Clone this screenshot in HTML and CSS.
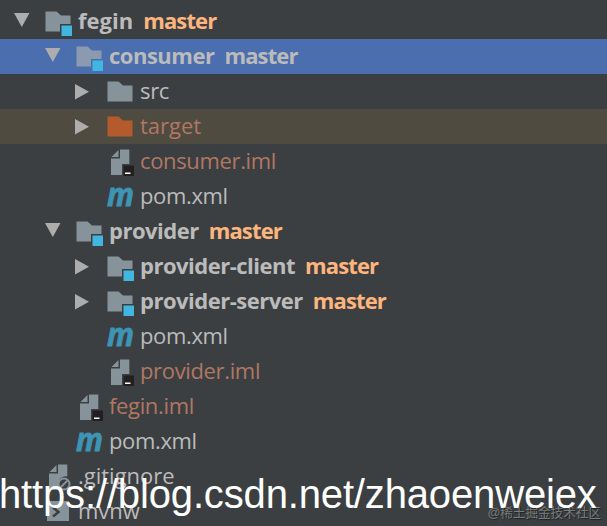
FILE: index.html
```html
<!DOCTYPE html>
<html lang="en">
<head>
    <meta charset="UTF-8">
    <meta name="viewport" content="width=device-width, initial-scale=1.0">
    <title>Project</title>
    <link rel="stylesheet" href="styles.css">
</head>
<body>
    <!-- Shared icons -->
    <svg class="sprite">
        <symbol id="open" viewBox="0 0 16 35"><path d="M0 9h15.5L7.8 23z" fill="#adadad"/></symbol>
        <symbol id="closed" viewBox="0 0 16 35"><path d="M-1 10v15.500L13 17.700z" fill="#adadad"/></symbol>
        <symbol id="folder" viewBox="0 0 32 35"><path d="M1.500 7.500h11l4.500 4H26.500v16h-25z"/></symbol>
        <symbol id="module" viewBox="0 0 32 35">
            <path d="M1.500 7.500h11l4.500 4H26.500v8.500h-10.500v7.500h-14.500z"/>
            <path d="M17.500 21.500H28V32H17.500z" fill="#40b6e0"/>
        </symbol>
        <symbol id="iml" viewBox="0 0 32 35">
            <path d="M14 5.500h9.300v14.500h-7.300v11H5V14.500h9z M12.500 6v7H5.500z"/>
            <path d="M17.500 21.500H28V32H17.500z" fill="#231f20"/>
            <path d="M19 28.500h5.500v1.500H19z" fill="#fff"/>
        </symbol>
        <symbol id="maven" viewBox="0 0 32 35">
            <text x="1" y="27" textLength="27" lengthAdjust="spacingAndGlyphs" class="m">m</text>
        </symbol>
        <symbol id="ignore" viewBox="0 0 32 35">
            <path d="M14 5.500h9.300v12c-5-1-10 3-8.300 9v4.500H5V14.500h9z M12.500 6v7H5.500z"/>
            <circle cx="20" cy="25" r="5.500" fill="none" stroke="#87939a" stroke-width="2"/>
            <path d="M16.500 28.500l7-7" stroke="#87939a" stroke-width="2"/>
        </symbol>
        <symbol id="shell" viewBox="0 0 32 35">
            <path d="M3 7h22v20H3z"/>
            <path d="M9 13.500l5.500 4.500-5.500 4.500" fill="none" stroke="#3c3f41" stroke-width="2.500"/>
        </symbol>
    </svg>

    <div class="tree">
        <div class="row module root">
            <svg class="arrow"><use href="#open"/></svg><svg class="icon"><use href="#module"/></svg>
            <span class="name">fegin</span><span class="branch">master</span>
        </div>
        <div class="row module level1 selected">
            <svg class="arrow"><use href="#open"/></svg><svg class="icon"><use href="#module"/></svg>
            <span class="name">consumer</span><span class="branch">master</span>
        </div>
        <div class="row level2">
            <svg class="arrow"><use href="#closed"/></svg><svg class="icon"><use href="#folder"/></svg>
            <span class="name">src</span>
        </div>
        <div class="row level2 excluded">
            <svg class="arrow"><use href="#closed"/></svg><svg class="icon"><use href="#folder"/></svg>
            <span class="name">target</span>
        </div>
        <div class="row level2 ignored">
            <svg class="arrow"></svg><svg class="icon"><use href="#iml"/></svg>
            <span class="name">consumer.iml</span>
        </div>
        <div class="row level2">
            <svg class="arrow"></svg><svg class="icon"><use href="#maven"/></svg>
            <span class="name">pom.xml</span>
        </div>
        <div class="row module level1">
            <svg class="arrow"><use href="#open"/></svg><svg class="icon"><use href="#module"/></svg>
            <span class="name">provider</span><span class="branch">master</span>
        </div>
        <div class="row module level2">
            <svg class="arrow"><use href="#closed"/></svg><svg class="icon"><use href="#module"/></svg>
            <span class="name">provider-client</span><span class="branch">master</span>
        </div>
        <div class="row module level2">
            <svg class="arrow"><use href="#closed"/></svg><svg class="icon"><use href="#module"/></svg>
            <span class="name">provider-server</span><span class="branch">master</span>
        </div>
        <div class="row level2">
            <svg class="arrow"></svg><svg class="icon"><use href="#maven"/></svg>
            <span class="name">pom.xml</span>
        </div>
        <div class="row level2 ignored">
            <svg class="arrow"></svg><svg class="icon"><use href="#iml"/></svg>
            <span class="name">provider.iml</span>
        </div>
        <div class="row level1 ignored">
            <svg class="arrow"></svg><svg class="icon"><use href="#iml"/></svg>
            <span class="name">fegin.iml</span>
        </div>
        <div class="row level1">
            <svg class="arrow"></svg><svg class="icon"><use href="#maven"/></svg>
            <span class="name">pom.xml</span>
        </div>
        <div class="row root">
            <svg class="arrow"></svg><svg class="icon"><use href="#ignore"/></svg>
            <span class="name">.gitignore</span>
        </div>
        <div class="row root">
            <svg class="arrow"></svg><svg class="icon"><use href="#shell"/></svg>
            <span class="name">mvnw</span>
        </div>
    </div>

    <div class="url">https://blog.csdn.net/zhaoenweiex</div>
    <div class="community">@稀土掘金技术社区</div>
</body>
</html>
```
FILE: styles.css
```css
* {
    box-sizing: border-box;
}

body {
    margin: 0;
    height: 526px;
    position: relative;
    overflow: hidden;
    background: #3c3f41;
    color: #bbbbbb;
    font-family: "Open Sans", "Noto Sans", sans-serif;
    font-size: 22px;
}

.sprite {
    position: absolute;
    width: 0;
    height: 0;
}

.sprite symbol {
    overflow: visible;
}

.tree {
    padding-top: 4px;
}

.row {
    display: flex;
    height: 35px;
    padding-left: 14px;
    line-height: 33px;
    letter-spacing: -0.35px;
    white-space: nowrap;
}

.level1 { padding-left: 45px; }
.level2 { padding-left: 76px; }

.arrow {
    width: 16px;
    height: 35px;
    margin-right: 14px;
    overflow: visible;
}

.icon {
    width: 32px;
    height: 35px;
    margin-right: 2px;
    fill: #87939a;
}

.module {
    font-weight: 700;
    letter-spacing: -0.5px;
}

.root, .excluded {
    letter-spacing: 0;
}

.branch {
    margin-left: 10px;
    color: #ffb57d;
    letter-spacing: -0.85px;
}

.selected {
    background: #4b6eaf;
}

.selected .icon {
    fill: #8b9ab0;
}

.selected .branch {
    color: #bbbbbb;
}

.excluded {
    background: #4f4b41;
}

.excluded .icon {
    fill: #b35b2c;
}

.excluded .name, .ignored .name {
    color: #b07763;
}

.m {
    font: italic 700 32px "Open Sans", sans-serif;
    letter-spacing: 0;
    fill: #3d94b5;
    stroke: #3d94b5;
    stroke-width: 0.8px;
}

/* Watermarks over the tree */
.url {
    position: absolute;
    left: -1px;
    top: 471px;
    font: 40px/46px "Liberation Sans", Arial, sans-serif;
    letter-spacing: -0.15px;
    color: #fff;
    white-space: nowrap;
}

.community {
    position: absolute;
    right: 6px;
    top: 503px;
    font: 12.6px/20px "Liberation Sans", "Noto Sans CJK SC", sans-serif;
    color: rgba(255, 255, 255, 0.36);
    text-shadow: 1px 1px 1px rgba(0, 0, 0, 0.5);
    white-space: nowrap;
}
```
